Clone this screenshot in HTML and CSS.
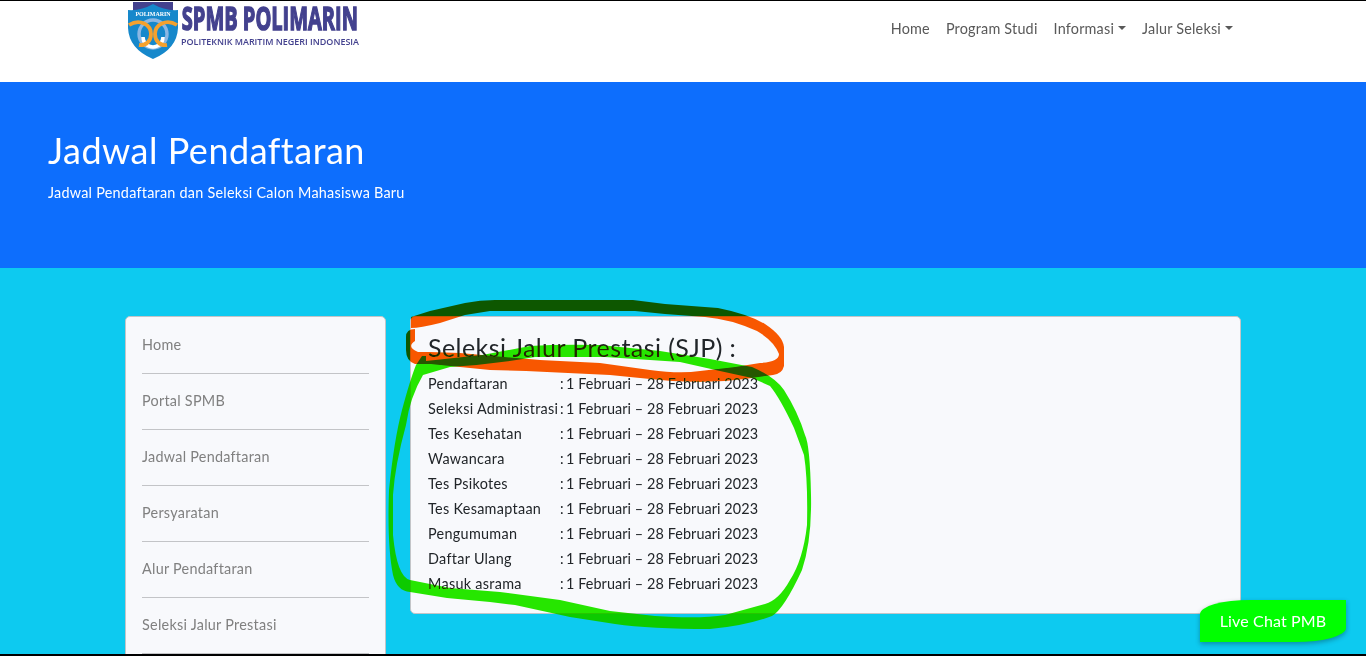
FILE: index.html
```html
<!DOCTYPE html>
<html lang="id">
<head>
<meta charset="utf-8">
<title>Jadwal Pendaftaran - SPMB Polimarin</title>
<link rel="stylesheet" href="styles.css">
</head>
<body>
<header class="navbar">
  <a class="brand">
    <svg class="shield" width="52" height="60" viewBox="0 0 52 60">
      <path d="M6 2h40v10H6z" fill="#43418e"/>
      <path d="M1 10Q14 11 26 4Q38 11 51 10V28Q50 49 26 59Q2 49 1 28Z" fill="#1688cb"/>
      <circle cx="26" cy="34" r="14" fill="none" stroke="#8cb7e3" stroke-width="3.4"/>
      <path d="M16 37a10 10 0 0 0 20 0" fill="none" stroke="#fff" stroke-width="3.6"/>
      <path d="M2 25C13 18 24 25 24 34C24 41 19 46 12 45M50 25C39 18 28 25 28 34C28 41 33 46 40 45" fill="none" stroke="#f5a12d" stroke-width="3.8"/>
      <text class="shield-name" x="26" y="16" text-anchor="middle" textLength="35">POLIMARIN</text>
    </svg>
    <svg class="wordmark" width="180" height="50" viewBox="0 0 180 50">
      <g transform="scale(.62 1)"><text class="word-main" x="3" y="29.5" textLength="284" lengthAdjust="spacingAndGlyphs">SPMB POLIMARIN</text></g>
      <text class="word-sub" x="1" y="45" textLength="178" lengthAdjust="spacingAndGlyphs">POLITEKNIK MARITIM NEGERI INDONESIA</text>
    </svg>
  </a>
  <nav class="nav">
    <a>Home</a><a>Program Studi</a><a class="drop">Informasi</a><a class="drop">Jalur Seleksi</a>
  </nav>
</header>
<section class="hero">
  <h1>Jadwal Pendaftaran</h1>
  <p>Jadwal Pendaftaran dan Seleksi Calon Mahasiswa Baru</p>
</section>
<main class="content">
  <aside class="card side">
    <a>Home</a><a>Portal SPMB</a><a>Jadwal Pendaftaran</a><a>Persyaratan</a><a>Alur Pendaftaran</a><a>Seleksi Jalur Prestasi</a>
  </aside>
  <article class="card schedule">
    <h2>Seleksi Jalur Prestasi (SJP) :</h2>
    <dl>
      <dt>Pendaftaran</dt><dd>:</dd><dd class="date">1 Februari – 28 Februari 2023</dd>
      <dt>Seleksi Administrasi</dt><dd>:</dd><dd class="date">1 Februari – 28 Februari 2023</dd>
      <dt>Tes Kesehatan</dt><dd>:</dd><dd class="date">1 Februari – 28 Februari 2023</dd>
      <dt>Wawancara</dt><dd>:</dd><dd class="date">1 Februari – 28 Februari 2023</dd>
      <dt>Tes Psikotes</dt><dd>:</dd><dd class="date">1 Februari – 28 Februari 2023</dd>
      <dt>Tes Kesamaptaan</dt><dd>:</dd><dd class="date">1 Februari – 28 Februari 2023</dd>
      <dt>Pengumuman</dt><dd>:</dd><dd class="date">1 Februari – 28 Februari 2023</dd>
      <dt>Daftar Ulang</dt><dd>:</dd><dd class="date">1 Februari – 28 Februari 2023</dd>
      <dt>Masuk asrama</dt><dd>:</dd><dd class="date">1 Februari – 28 Februari 2023</dd>
    </dl>
  </article>
</main>
<svg class="marker" viewBox="0 0 1366 656">
  <path class="orange" fill-rule="evenodd" d="M411 317L430 311L465 303Q480 300 495 300L633 300L665 304L718 308Q748 314 765 324Q783 336 784 347V366Q782 374 773 375L745 379Q700 385 650 379L610 375L526 371L490 370L450 366L430 364L415 364Q406 361 406 350V337Q406 329 415 329V341Q406 347 418 352H430L460 353L540 360L600 363L650 370Q680 374 700 371L735 367L760 363Q779 362 779 354Q774 341 757 331Q730 319 705 317L665 314L635 311H490L465 315L440 323Q420 328 411 328Z"/>
</svg>
<svg class="marker" viewBox="0 0 1366 656">
  <path class="green" fill-rule="evenodd" d="M416 365L422 356H426V361L482 355L530 346Q560 344 600 345L660 351L710 359L752 367Q775 377 784 390Q798 412 805 435Q810 445 811 495Q812 540 802 570Q784 609 772 616Q745 626 710 629Q650 629 615 624L570 617L515 605L490 602L447 598L410 592Q397 591 393 575Q387 545 389 490Q394 440 402 410Q410 380 416 365ZM423 375Q410 397 406 425Q395 465 393 495V535Q397 577 410 580L450 588L500 592L560 600L610 611L655 616Q700 619 725 615L765 604Q779 600 790 580Q803 560 807 525Q808 480 804 455L794 428Q780 398 770 386L752 378L720 371L680 362L605 357L535 357Q495 364 450 367Z"/>
</svg>
<a class="chat">Live Chat PMB</a>
<div class="frame"></div>
</body>
</html>
```
FILE: styles.css
```css
* { box-sizing: border-box; }
body { margin: 0; height: 656px; overflow: hidden; display: flex; flex-direction: column; background: #0dcaf0; color: #212529; font: 14.4px/25px Lato, "Open Sans", sans-serif; letter-spacing: .3px; }
.navbar { flex: none; height: 82px; padding: 0 133px 0 127px; background: #fff; display: flex; justify-content: space-between; align-items: flex-start; }
.brand { display: flex; gap: 1px; }
.wordmark { overflow: visible; }
.shield-name { font: bold 6px "Liberation Serif", serif; fill: #fff; letter-spacing: 0; }
.word-main { font: bold 32px/1 "Open Sans", sans-serif; fill: #43418e; stroke: #43418e; stroke-width: 1.5px; letter-spacing: 0; }
.word-sub { font: 600 9px/1 "Open Sans", sans-serif; fill: #43418e; letter-spacing: 0; }
.nav { display: flex; gap: 16px; padding-top: 16px; color: #595959; letter-spacing: .2px; }
.drop { display: flex; align-items: center; gap: 4px; }
.drop::after { content: ""; border: 4.3px solid transparent; border-top-color: #595959; border-bottom: 0; margin-top: -1px; }
.hero { flex: none; height: 186px; padding: 47px 48px; background: #0d6efd; color: #fff; }
.hero h1 { margin: 0 0 8px; font-size: 36px; line-height: 43px; font-weight: 400; letter-spacing: .5px; }
.hero p { margin: 0; letter-spacing: .25px; }
.content { flex: 1; min-height: 0; overflow: hidden; display: flex; align-items: flex-start; gap: 24px; padding: 48px 125px 0; }
.card { background: #f8f9fc; border: 1px solid #c3c5c8; border-radius: 5px; }
.side { flex: none; width: 261px; height: 400px; padding: 0 16px; color: #808080; display: flex; flex-direction: column; letter-spacing: .26px; }
.side a { height: 56px; padding-top: 14px; border-bottom: 1px solid #c3c4c7; flex: none; }
.side a:first-child { height: 57px; padding-top: 15px; }
.schedule { flex: 1; height: 298px; padding: 15px 17px; }
.schedule h2 { margin: 0 0 8px; font-size: 25px; line-height: 31px; font-weight: 400; letter-spacing: .43px; }
.schedule dl { margin: 0; display: grid; grid-template-columns: 132px 6px auto; line-height: 25px; white-space: nowrap; }
.schedule dd { margin: 0; }
.schedule .date { letter-spacing: .08px; }
.marker { position: absolute; left: 0; top: 0; width: 1366px; height: 656px; mix-blend-mode: darken; pointer-events: none; }
.orange { fill: #fa5700; }
.green { fill: #26e600; }
.chat { position: absolute; right: 20px; bottom: 14px; width: 146px; height: 42px; line-height: 41px; text-align: center; font-size: 16px; letter-spacing: .15px; color: #fff; background: #0f0; border-radius: 50px 0 50px 0 / 14px 0 14px 0; box-shadow: 0 2px 5px rgba(0,0,0,.3); }
.frame { position: absolute; left: 0; top: 0; width: 1366px; height: 656px; border-top: 1px solid #000; border-bottom: 2px solid #000; pointer-events: none; }
```
